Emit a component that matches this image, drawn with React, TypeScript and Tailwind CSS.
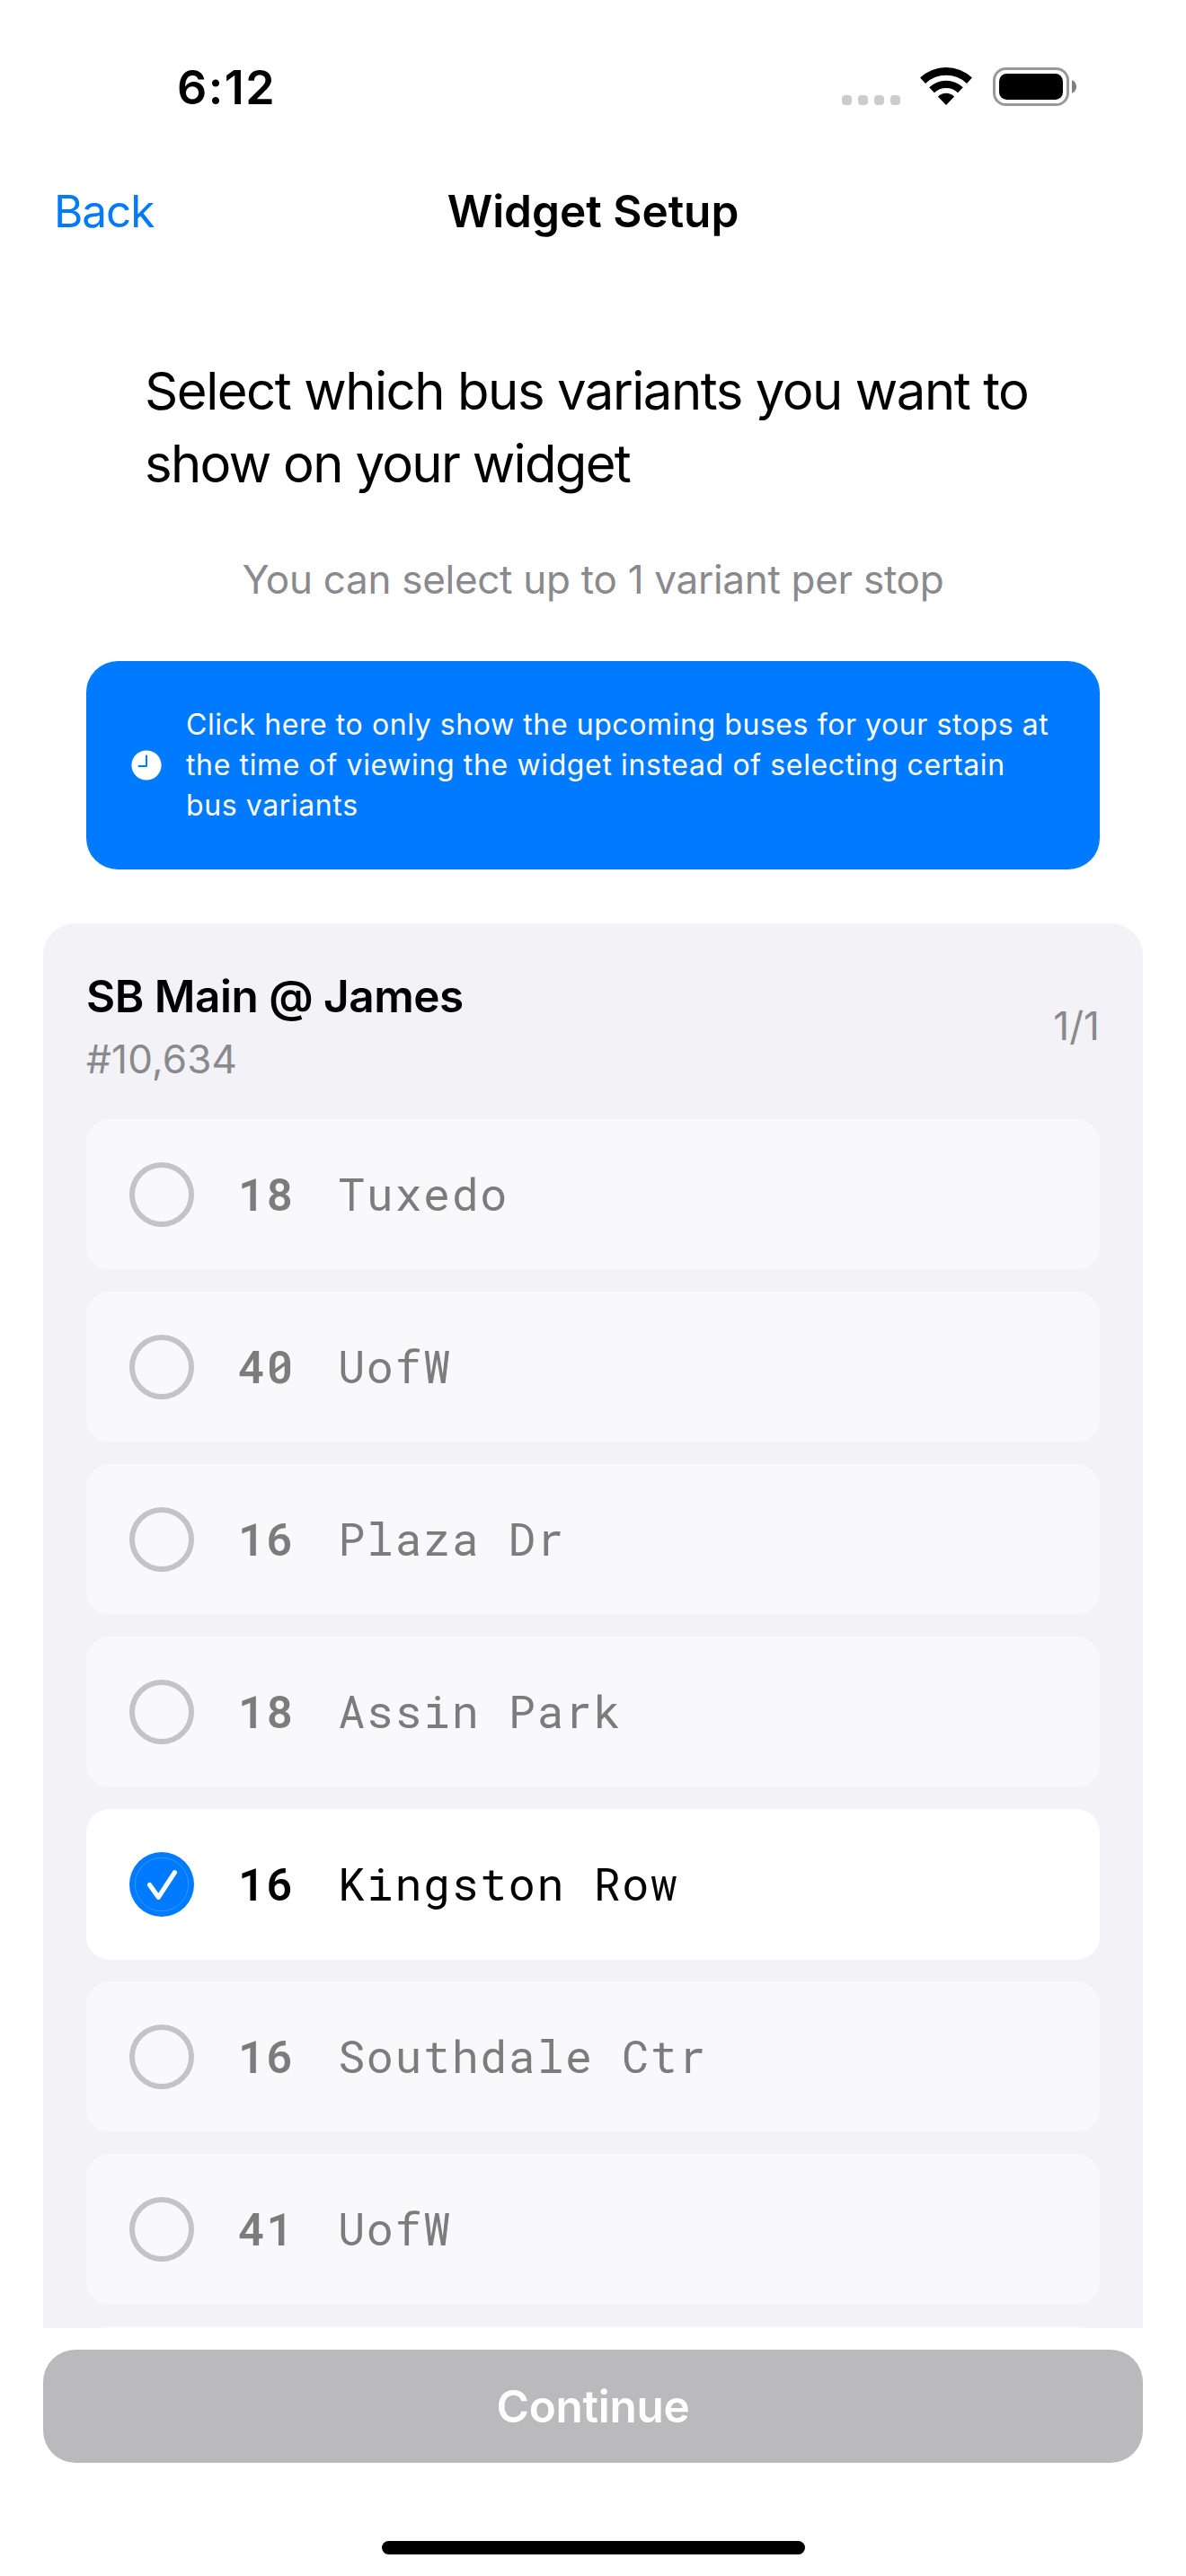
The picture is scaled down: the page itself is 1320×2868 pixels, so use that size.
import React from "react";

type Variant = { route: string; name: string; selected?: boolean };

const variants: Variant[] = [
  { route: "18", name: "Tuxedo" },
  { route: "40", name: "UofW" },
  { route: "16", name: "Plaza Dr" },
  { route: "18", name: "Assin Park" },
  { route: "16", name: "Kingston Row", selected: true },
  { route: "16", name: "Southdale Ctr" },
  { route: "41", name: "UofW" },
];

function WifiIcon() {
  return (
    <svg width="58" height="42" viewBox="0 0 58 42" fill="#000">
      <path d="M0.1 11.6A42 42 0 0 1 57.9 11.6L52 17.9A33.3 33.3 0 0 0 6 17.9Z" />
      <path d="M10.2 22.2A27.3 27.3 0 0 1 47.8 22.2L42.1 28.3A19 19 0 0 0 15.9 28.3Z" />
      <path d="M19.9 32.4A13.3 13.3 0 0 1 38.1 32.4L29 42Z" />
    </svg>
  );
}

function BatteryIcon() {
  return (
    <svg width="93" height="43" viewBox="0 0 93 43" fill="none">
      <rect x="1.5" y="1.5" width="82" height="40" rx="13" stroke="#999" strokeWidth="3" />
      <rect x="7" y="7" width="71" height="29" rx="8.5" fill="#000" />
      <path d="M88 14.3C91 15.2 93 18 93 21.5C93 25 91 27.800 88 28.7Z" fill="#808080" />
    </svg>
  );
}

function StatusBar() {
  return (
    <div className="flex h-[169px] items-start justify-between pl-[197px] pr-[122px]">
      <div className="pt-[66px] text-[52px] font-semibold leading-[64px] tracking-[1.5px]">6:12</div>
      <div className="flex items-end pt-[75px]">
        <div className="mb-px flex gap-[7px]">
          {[0, 1, 2, 3].map((i) => (
            <div key={i} className="h-[11px] w-[11px] rounded-[4px] bg-[#ccc]" />
          ))}
        </div>
        <div className="mb-px ml-[22px]">
          <WifiIcon />
        </div>
        <div className="ml-[23px]">
          <BatteryIcon />
        </div>
      </div>
    </div>
  );
}

function ClockIcon() {
  return (
    <svg className="shrink-0" width="34" height="34" viewBox="0 0 34 34" fill="none">
      <circle cx="17" cy="17" r="16.6" fill="#fff" />
      <path d="M17 6.500V18H8.500" stroke="#007aff" strokeWidth="2" strokeLinecap="round" strokeLinejoin="round" />
    </svg>
  );
}

function CheckMark({ selected }: { selected?: boolean }) {
  if (!selected) {
    return <div className="h-[72px] w-[72px] shrink-0 rounded-full border-[6px] border-[#c4c4c7]" />;
  }
  return (
    <svg className="shrink-0" width="72" height="72" viewBox="0 0 72 72" fill="none">
      <circle cx="36" cy="36" r="36" fill="#007aff" />
      <circle cx="36" cy="36" r="29.700" stroke="#4da2ff" strokeWidth="0.7" />
      <path d="M22.500 36.500L32.300 50.300L50.300 22.800" stroke="#fff" strokeWidth="5.200" strokeLinecap="round" strokeLinejoin="round" />
    </svg>
  );
}

function VariantRow({ route, name, selected }: Variant) {
  return (
    <div
      className={
        selected
          ? "flex h-[168px] shrink-0 items-center rounded-[26px] bg-white px-12 text-black"
          : "flex h-[168px] shrink-0 items-center rounded-[26px] bg-[#f9f9fb] px-12 text-[#7c7c7d]"
      }
    >
      <CheckMark selected={selected} />
      <div className="ml-[49px] flex gap-12 pb-[3px] font-['Roboto_Mono','DejaVu_Sans_Mono',monospace] text-[50px] leading-[66px] tracking-[1.6px]">
        <span className="font-semibold">{route}</span>
        <span>{name}</span>
      </div>
    </div>
  );
}

export default function App() {
  return (
    <div className="flex h-[2868px] w-[1320px] flex-col overflow-hidden bg-white font-['Inter',sans-serif] text-black">
      <StatusBar />

      <div className="grid h-[132px] grid-cols-3 items-center px-[60px] text-[49.5px] leading-[60px]">
        <div className="tracking-[-1.1px] text-[#007aff]">Back</div>
        <div className="whitespace-nowrap text-center font-semibold">Widget Setup</div>
      </div>

      <div className="mt-[94px] whitespace-nowrap pl-[161px] text-[58px] leading-[80.5px]">
        <div className="tracking-[-1.45px]">Select which bus variants you want to</div>
        <div className="tracking-[-1.67px]">show on your widget</div>
      </div>

      <div className="mt-[62px] text-center text-[44px] leading-[54px] tracking-[-0.29px] text-[#8a8a8e]">
        You can select up to 1 variant per stop
      </div>

      <div className="mx-24 mt-16 flex h-[232px] shrink-0 items-center rounded-[35px] bg-[#007aff] pl-[50px] text-white">
        <ClockIcon />
        <div className="ml-[27px] whitespace-nowrap pb-[2px] text-[32px] leading-[45px]">
          <div className="tracking-[0.58px]">Click here to only show the upcoming buses for your stops at</div>
          <div className="tracking-[0.63px]">the time of viewing the widget instead of selecting certain</div>
          <div className="tracking-[0.6px]">bus variants</div>
        </div>
      </div>

      <div className="mx-12 mt-[60px] flex h-[1564px] shrink-0 flex-col overflow-hidden rounded-t-[36px] bg-[#f2f2f7] px-12 pt-[51px]">
        <div className="mb-10 flex items-center justify-between">
          <div>
            <div className="text-[49.5px] font-semibold leading-[60px] tracking-[-0.49px]">SB Main @ James</div>
            <div className="mt-[13px] text-[44px] leading-[54px] tracking-[0.2px] text-[#8a8a8e]">#10,634</div>
          </div>
          <div className="pb-[2px] text-[44px] leading-[54px] text-[#8a8a8e]">1/1</div>
        </div>
        <div className="flex flex-col gap-6">
          {variants.map((v, i) => (
            <VariantRow key={i} {...v} />
          ))}
          <div className="h-[168px] shrink-0 rounded-[26px] bg-[#f9f9fb]" />
        </div>
      </div>

      <button className="mx-12 mt-6 h-[126px] shrink-0 rounded-[36px] bg-[#bababc] text-[49.5px] font-semibold leading-[60px] tracking-[-0.3px] text-white">
        Continue
      </button>

      <div className="mx-auto mt-[87px] h-[15px] w-[471px] shrink-0 rounded-full bg-black" />
    </div>
  );
}
